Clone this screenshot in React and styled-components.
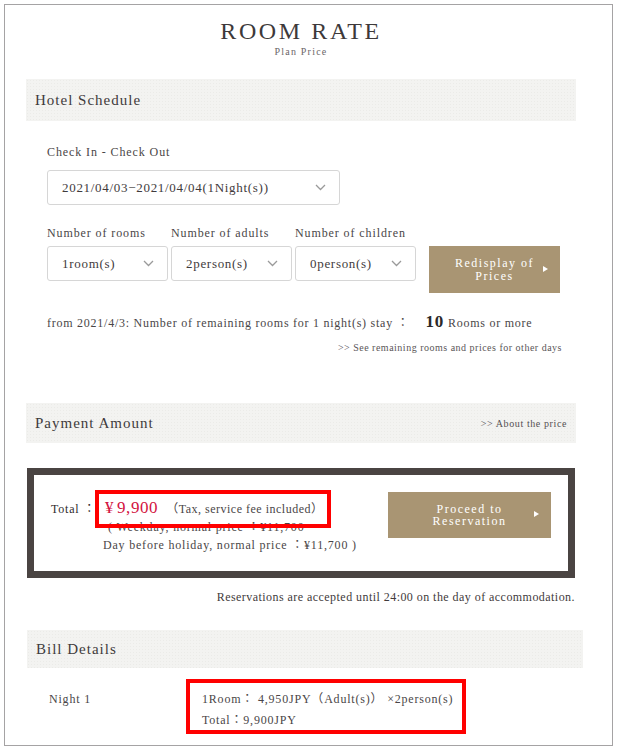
import styled, { createGlobalStyle } from "styled-components";

const GlobalStyle = createGlobalStyle`
  body {
    margin: 0;
    background: #ffffff;
    font-family: "Liberation Serif", "Noto Sans CJK JP", serif;
    color: #444041;
  }
`;

function Chevron() {
  return (
    <svg width="11" height="7" viewBox="0 0 11 7">
      <polyline points="1,1 5.5,5.5 10,1" fill="none" stroke="#9a9a9a" strokeWidth="1.3" />
    </svg>
  );
}

function Select({ value, width }) {
  return (
    <SelectBox $width={width}>
      <span>{value}</span>
      <Chevron />
    </SelectBox>
  );
}

export default function App() {
  return (
    <>
      <GlobalStyle />
      <Frame>
        <Header>
          <Title>ROOM RATE</Title>
          <Subtitle>Plan Price</Subtitle>
        </Header>

        <Bar>
          <BarTitle>Hotel Schedule</BarTitle>
        </Bar>

        <Schedule>
          <Label>Check In - Check Out</Label>
          <DateSelect>
            <Select value="2021/04/03−2021/04/04(1Night(s))" width={293} />
          </DateSelect>

          <OptionsGrid>
            <Label>Number of rooms</Label>
            <Label>Number of adults</Label>
            <Label>Number of children</Label>
            <span />
            <Select value="1room(s)" width={121} />
            <Select value="2person(s)" width={121} />
            <Select value="0person(s)" width={121} />
            <GoldButton $width={131} $height={47}>
              <span>
                Redisplay of
                <br />
                Prices
              </span>
              <Arrow />
            </GoldButton>
          </OptionsGrid>

          <Remaining>
            from 2021/4/3: Number of remaining rooms for 1 night(s) stay ：
            <Count>10</Count>Rooms or more
          </Remaining>
          <SmallLink>&gt;&gt; See remaining rooms and prices for other days</SmallLink>
        </Schedule>

        <Bar $top={48} $height={40}>
          <BarTitle>Payment Amount</BarTitle>
          <BarLink>&gt;&gt; About the price</BarLink>
        </Bar>

        <PriceBox>
          <TotalLabel>Total ：</TotalLabel>
          <PriceBlock>
            <PriceLine>
              <Price>¥ 9,900</Price>
              <Note>（Tax, service fee included）</Note>
            </PriceLine>
            <SubLine>( Weekday, normal price ：¥11,700</SubLine>
            <SubLine $tall>Day before holiday, normal price ：¥11,700 )</SubLine>
            <Highlight $left={-8} $top={-8} $width={236} $height={38} />
          </PriceBlock>
          <GoldButton $width={163} $height={46} $top={17}>
            <span>
              Proceed to
              <br />
              Reservation
            </span>
            <Arrow />
          </GoldButton>
        </PriceBox>

        <Notice>Reservations are accepted until 24:00 on the day of accommodation.</Notice>

        <Bar $top={25} $height={38} $wide>
          <BarTitle>Bill Details</BarTitle>
        </Bar>

        <BillRow>
          <NightLabel>Night 1</NightLabel>
          <BillBox>
            <div>1Room： 4,950JPY（Adult(s)） ×2person(s)</div>
            <div>Total：9,900JPY</div>
          </BillBox>
        </BillRow>
      </Frame>
    </>
  );
}

const Frame = styled.div`
  box-sizing: border-box;
  width: 609px;
  height: 742px;
  margin: 4px 0 0 4px;
  padding: 0 0 0 21px;
  border: 1px solid #a5a3a4;
  overflow: hidden;
`;

const Header = styled.div`
  width: 550px;
  padding-top: 12px;
  text-align: center;
`;

const Title = styled.h1`
  margin: 0;
  font-size: 24px;
  line-height: 28px;
  font-weight: 400;
  letter-spacing: 2.6px;
  color: #3d393a;
`;

const Subtitle = styled.div`
  margin-top: 1px;
  font-size: 10px;
  line-height: 12px;
  letter-spacing: 1.2px;
  color: #6a6668;
`;

const Bar = styled.div`
  box-sizing: border-box;
  width: ${(p) => (p.$wide ? 556 : 550)}px;
  height: ${(p) => p.$height || 42}px;
  margin: ${(p) => p.$top || 21}px 0 0 ${(p) => (p.$wide ? 1 : 0)}px;
  padding: 0 9px;
  display: flex;
  align-items: center;
  justify-content: space-between;
  background: #f3f3f1;
  background-image: radial-gradient(#ebebe8 0.6px, transparent 0.8px);
  background-size: 3px 3px;
`;

const BarTitle = styled.div`
  font-size: 15px;
  letter-spacing: 1px;
  color: #3f3b3c;
`;

const BarLink = styled.div`
  font-size: 10px;
  letter-spacing: 0.6px;
  color: #555153;
`;

const Schedule = styled.div`
  width: 550px;
  box-sizing: border-box;
  padding: 23px 14px 0 21px;
`;

const Label = styled.div`
  font-size: 12px;
  line-height: 16px;
  letter-spacing: 0.9px;
  color: #4a4647;
  white-space: nowrap;
`;

const DateSelect = styled.div`
  margin: 10px 0 20px;
`;

const SelectBox = styled.div`
  box-sizing: border-box;
  width: ${(p) => p.$width}px;
  height: 35px;
  padding: 0 13px 0 14px;
  display: flex;
  align-items: center;
  justify-content: space-between;
  border: 1px solid #d6d6d6;
  border-radius: 3px;
  background: #fff;
  font-size: 13px;
  letter-spacing: 0.7px;
  color: #3f3b3c;
  white-space: nowrap;
`;

const OptionsGrid = styled.div`
  display: grid;
  grid-template-columns: 121px 121px 121px 131px;
  column-gap: 3px;
  row-gap: 5px;
  align-items: start;

  & > button {
    margin-left: 10px;
  }
`;

const GoldButton = styled.button`
  position: relative;
  box-sizing: border-box;
  width: ${(p) => p.$width}px;
  height: ${(p) => p.$height}px;
  margin-top: ${(p) => p.$top || 0}px;
  padding: 0;
  border: none;
  background: #a99573;
  color: #ffffff;
  font-family: inherit;
  font-size: 12px;
  line-height: 12.5px;
  letter-spacing: 1.5px;
  display: flex;
  align-items: center;
  justify-content: center;
  flex-shrink: 0;

  & > span {
    text-align: center;
  }
`;

const Arrow = styled.i`
  position: absolute;
  right: 12px;
  top: 50%;
  margin-top: -4px;
  width: 0;
  height: 0;
  border-top: 3.5px solid transparent;
  border-bottom: 3.5px solid transparent;
  border-left: 5px solid #ffffff;
`;

const Remaining = styled.div`
  margin-top: 19px;
  font-size: 12px;
  line-height: 20px;
  letter-spacing: 0.75px;
  color: #4a4647;
  white-space: nowrap;
`;

const Count = styled.span`
  margin: 0 4px 0 16px;
  font-size: 17px;
  font-weight: 700;
  color: #2c2829;
`;

const SmallLink = styled.div`
  margin-top: 8px;
  text-align: right;
  font-size: 10px;
  line-height: 14px;
  letter-spacing: 0.5px;
  color: #5a5658;
`;

const PriceBox = styled.div`
  box-sizing: border-box;
  width: 548px;
  height: 110px;
  margin: 25px 0 0 1px;
  padding: 0 17px;
  border: 7px solid #4a4442;
  display: flex;
  align-items: flex-start;
`;

const TotalLabel = styled.div`
  margin-top: 24px;
  width: 52px;
  font-size: 12px;
  line-height: 20px;
  letter-spacing: 0.8px;
  color: #2f2b2c;
  white-space: nowrap;
`;

const PriceBlock = styled.div`
  position: relative;
  margin-top: 23px;
  flex: 1;
`;

const PriceLine = styled.div`
  display: flex;
  align-items: baseline;
  line-height: 20px;
  padding-left: 2px;
`;

const Price = styled.span`
  font-size: 17px;
  letter-spacing: 0.6px;
  word-spacing: -2px;
  color: #d3123f;
  white-space: nowrap;
`;

const Note = styled.span`
  margin-left: 8px;
  font-size: 12px;
  letter-spacing: 0.5px;
  color: #4a4647;
`;

const SubLine = styled.div`
  padding-left: ${(p) => (p.$tall ? 0 : 5)}px;
  font-size: 12px;
  line-height: ${(p) => (p.$tall ? 20 : 16)}px;
  letter-spacing: 0.8px;
  color: #4a4647;
  white-space: nowrap;
`;

const Highlight = styled.div`
  position: absolute;
  left: ${(p) => p.$left}px;
  top: ${(p) => p.$top}px;
  width: ${(p) => p.$width}px;
  height: ${(p) => p.$height}px;
  box-sizing: border-box;
  border: 4px solid #ff0000;
`;

const Notice = styled.div`
  width: 549px;
  margin-top: 11px;
  text-align: right;
  font-size: 12px;
  line-height: 16px;
  letter-spacing: 0.45px;
  color: #3f3b3c;
  white-space: nowrap;
`;

const BillRow = styled.div`
  margin: 11px 0 0 23px;
  display: flex;
  align-items: flex-start;
`;

const NightLabel = styled.div`
  width: 137px;
  padding-top: 10px;
  font-size: 12px;
  line-height: 20px;
  letter-spacing: 0.8px;
  color: #4a4647;
`;

const BillBox = styled.div`
  box-sizing: border-box;
  width: 280px;
  height: 55px;
  padding: 6px 0 0 12px;
  border: 4px solid #ff0000;
  font-size: 12px;
  line-height: 21px;
  letter-spacing: 0.8px;
  color: #4a4647;
  white-space: nowrap;
`;
